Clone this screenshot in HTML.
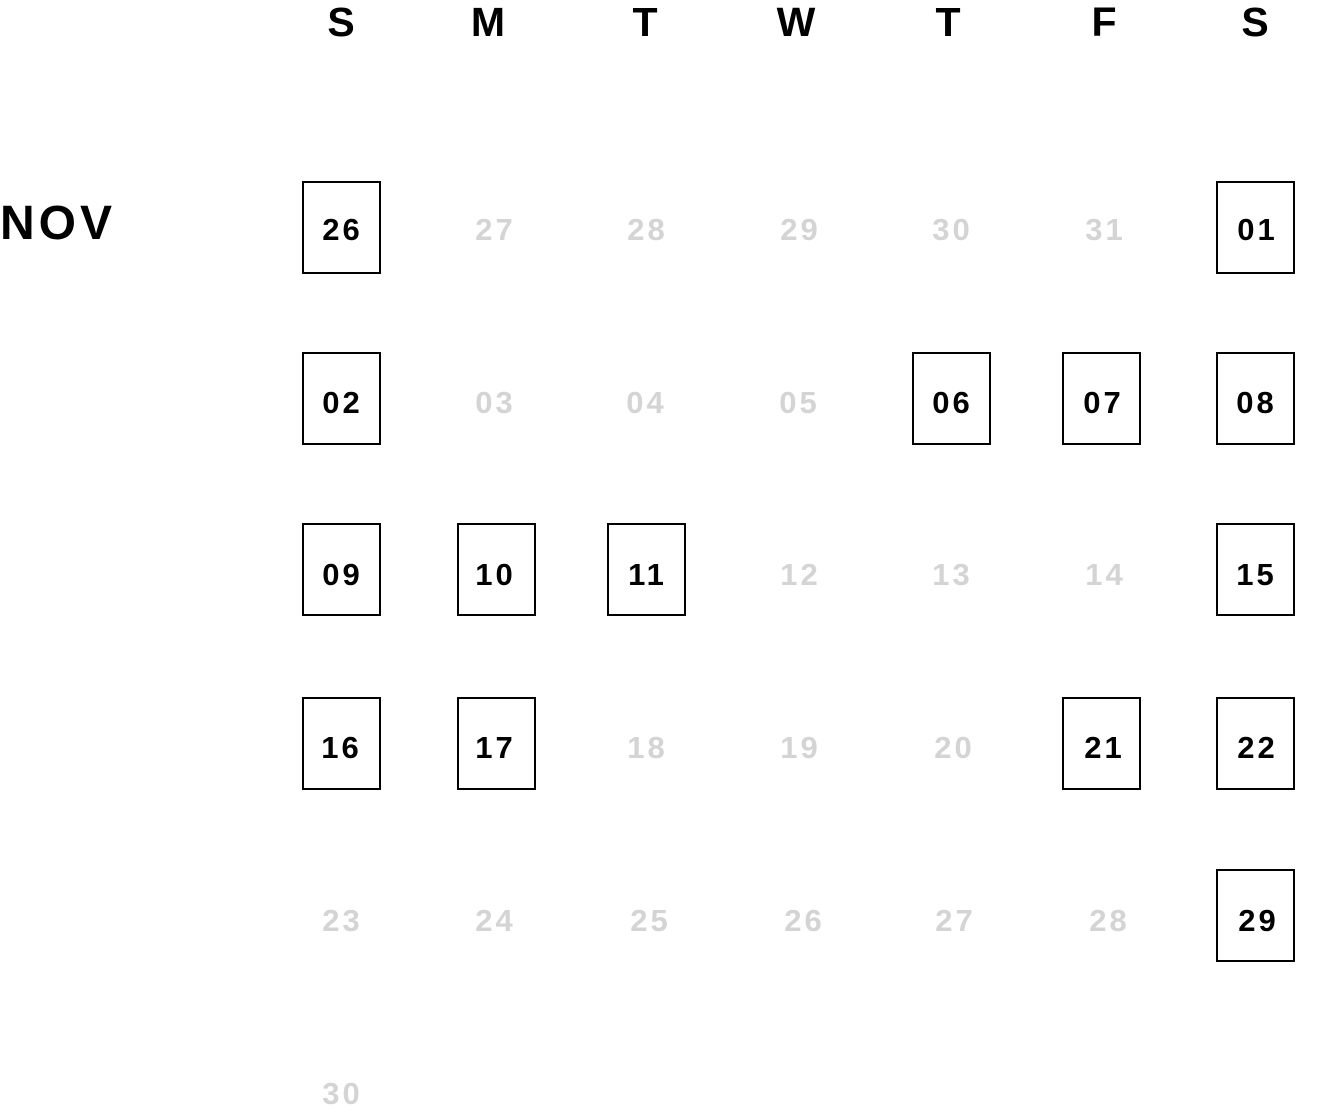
<!DOCTYPE html>
<html><head><meta charset="utf-8"><style>
html,body{margin:0;padding:0;background:#fff;width:1321px;height:1118px;overflow:hidden;position:relative;font-family:"Liberation Sans",sans-serif;}
.h{position:absolute;top:0;width:60px;margin-left:-30px;text-align:center;font-size:41px;font-weight:bold;line-height:44px;color:#000;}
.n{position:absolute;width:80px;margin-left:-40px;text-align:center;font-size:31px;font-weight:bold;letter-spacing:3px;text-indent:3px;line-height:30px;color:#d4d4d4;padding-top:2px;}
.n.on{color:#000;}
.b{position:absolute;width:75px;height:89px;border:2px solid #000;}
.nov{position:absolute;left:0;top:199px;font-size:48px;font-weight:bold;letter-spacing:4px;line-height:50px;}
</style></head><body>
<div class="h" style="left:341px">S</div>
<div class="h" style="left:488px">M</div>
<div class="h" style="left:645px">T</div>
<div class="h" style="left:796px">W</div>
<div class="h" style="left:948px">T</div>
<div class="h" style="left:1104px">F</div>
<div class="h" style="left:1255px">S</div>
<div class="nov">NOV</div>

<div class="b" style="left:302px;top:181px"></div>
<div class="b" style="left:1216px;top:181px"></div>
<div class="b" style="left:302px;top:352px"></div>
<div class="b" style="left:912px;top:352px"></div>
<div class="b" style="left:1062px;top:352px"></div>
<div class="b" style="left:1216px;top:352px"></div>
<div class="b" style="left:302px;top:523px"></div>
<div class="b" style="left:457px;top:523px"></div>
<div class="b" style="left:607px;top:523px"></div>
<div class="b" style="left:1216px;top:523px"></div>
<div class="b" style="left:302px;top:697px"></div>
<div class="b" style="left:457px;top:697px"></div>
<div class="b" style="left:1062px;top:697px"></div>
<div class="b" style="left:1216px;top:697px"></div>
<div class="b" style="left:1216px;top:869px"></div>

<div class="n on" style="left:341px;top:213px">26</div>
<div class="n" style="left:494px;top:213px">27</div>
<div class="n" style="left:646px;top:213px">28</div>
<div class="n" style="left:799px;top:213px">29</div>
<div class="n" style="left:951px;top:213px">30</div>
<div class="n" style="left:1104px;top:213px">31</div>
<div class="n on" style="left:1256px;top:213px">01</div>

<div class="n on" style="left:341px;top:386px">02</div>
<div class="n" style="left:494px;top:386px">03</div>
<div class="n" style="left:645px;top:386px">04</div>
<div class="n" style="left:798px;top:386px">05</div>
<div class="n on" style="left:951px;top:386px">06</div>
<div class="n on" style="left:1102px;top:386px">07</div>
<div class="n on" style="left:1255px;top:386px">08</div>

<div class="n on" style="left:341px;top:558px">09</div>
<div class="n on" style="left:494px;top:558px">10</div>
<div class="n on" style="left:646px;top:558px">11</div>
<div class="n" style="left:799px;top:558px">12</div>
<div class="n" style="left:951px;top:558px">13</div>
<div class="n" style="left:1104px;top:558px">14</div>
<div class="n on" style="left:1255px;top:558px">15</div>

<div class="n on" style="left:340px;top:731px">16</div>
<div class="n on" style="left:494px;top:731px">17</div>
<div class="n" style="left:646px;top:731px">18</div>
<div class="n" style="left:799px;top:731px">19</div>
<div class="n" style="left:953px;top:731px">20</div>
<div class="n on" style="left:1103px;top:731px">21</div>
<div class="n on" style="left:1256px;top:731px">22</div>

<div class="n" style="left:341px;top:904px">23</div>
<div class="n" style="left:494px;top:904px">24</div>
<div class="n" style="left:649px;top:904px">25</div>
<div class="n" style="left:803px;top:904px">26</div>
<div class="n" style="left:954px;top:904px">27</div>
<div class="n" style="left:1108px;top:904px">28</div>
<div class="n on" style="left:1257px;top:904px">29</div>

<div class="n" style="left:341px;top:1077px">30</div>
</body></html>
